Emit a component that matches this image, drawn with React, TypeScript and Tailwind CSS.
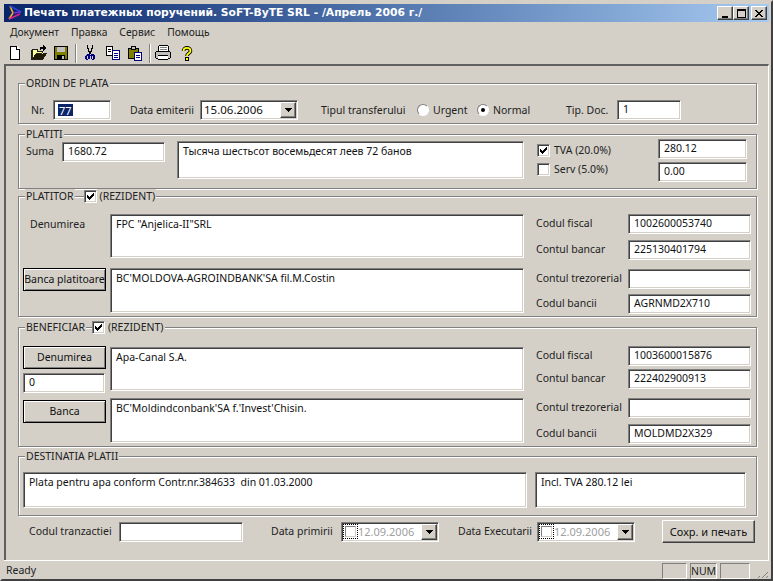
import type { ReactNode } from 'react'

const sunken =
  'border border-t-[#808080] border-l-[#808080] border-r-white border-b-white bg-white shadow-[inset_1px_1px_0_#404040,inset_-1px_-1px_0_#d4d0c8]'
const raised =
  'border border-t-white border-l-white border-r-[#404040] border-b-[#404040] bg-[#d4d0c8] shadow-[inset_-1px_-1px_0_#808080]'
const panel = 'h-[16px] border border-t-[#808080] border-l-[#808080] border-r-white border-b-white'

function Field({ value, className = '' }: { value?: string; className?: string }) {
  return (
    <div className={`${sunken} flex shrink-0 items-center overflow-hidden whitespace-nowrap pb-[1px] pl-[5px] text-[#111] ${className}`}>
      {value}
    </div>
  )
}

function Memo({ value, className = '' }: { value: string; className?: string }) {
  return <div className={`${sunken} shrink-0 overflow-hidden whitespace-pre pl-[5px] pt-[4px] text-[#111] ${className}`}>{value}</div>
}

function Arrow() {
  return (
    <div className={`${raised} flex h-[16px] w-[16px] items-center justify-center`}>
      <svg width="7" height="4" viewBox="0 0 7 4" shapeRendering="crispEdges">
        <path d="M0 0h7v1H0zM1 1h5v1H1zM2 2h3v1H2zM3 3h1v1H3z" fill="#000" />
      </svg>
    </div>
  )
}

function DateCombo({ value, disabled, className = '' }: { value: string; disabled?: boolean; className?: string }) {
  return (
    <div className={`${sunken} flex h-[20px] w-[98px] shrink-0 items-center justify-between pr-[1px] ${className}`}>
      {disabled ? (
        <div className="flex items-center text-[#a0a0a0]">
          <div className="ml-[1px] flex h-[15px] w-[15px] items-center justify-center border border-dotted border-black">
            <div className="h-[11px] w-[11px] border border-t-[#808080] border-l-[#808080] border-r-[#d4d0c8] border-b-[#d4d0c8] bg-white" />
          </div>
          <span className="text-[11px]">{value}</span>
        </div>
      ) : (
        <span className="pl-[3px] text-[11.5px] text-[#111]">{value}</span>
      )}
      <Arrow />
    </div>
  )
}

function Group({ title, className = '', children }: { title: ReactNode; className?: string; children: ReactNode }) {
  return (
    <div className={`relative w-[739px] shrink-0 border border-[#808080] shadow-[inset_1px_1px_0_#fff,1px_1px_0_#fff] ${className}`}>
      <div className="absolute left-[6px] top-[-8px] flex h-[14px] items-center text-[#222]">{title}</div>
      {children}
    </div>
  )
}

function Legend({ children, className = '' }: { children: ReactNode; className?: string }) {
  return <span className={`flex h-[14px] items-center bg-[#d4d0c8] px-[1px] ${className}`}>{children}</span>
}

function Check({ checked }: { checked?: boolean }) {
  return (
    <div className={`${sunken} flex h-[13px] w-[13px] shrink-0 items-center justify-center`}>
      {checked && (
        <svg width="7" height="7" viewBox="0 0 7 7" shapeRendering="crispEdges">
          <path d="M6 0h1v3H6zM5 1h1v3H5zM4 2h1v3H4zM3 3h1v3H3zM2 4h1v3H2zM1 3h1v3H1zM0 2h1v3H0z" fill="#000" />
        </svg>
      )}
    </div>
  )
}

function Radio({ checked, label, className = '' }: { checked?: boolean; label: string; className?: string }) {
  return (
    <div className={`flex items-center gap-[4px] ${className}`}>
      <div className="flex h-[12px] w-[12px] items-center justify-center rounded-full border border-t-[#808080] border-l-[#808080] border-r-white border-b-white bg-white">
        {checked && <div className="h-[4px] w-[4px] rounded-full bg-black" />}
      </div>
      <span className="text-[#222]">{label}</span>
    </div>
  )
}

function Btn({ label, className = '' }: { label: string; className?: string }) {
  return (
    <div className={`flex h-[23px] w-[83px] shrink-0 items-center justify-center whitespace-nowrap border border-black bg-[#d4d0c8] text-[#111] shadow-[inset_1px_1px_0_#fff,inset_-1px_-1px_0_#808080] ${className}`}>
      {label}
    </div>
  )
}

function SideRow({ label, value }: { label: string; value: string }) {
  return (
    <div className="flex items-center">
      <span className="-mt-[2px] w-[92px] text-[#222]">{label}</span>
      <Field value={value} className="h-[20px] w-[123px]" />
    </div>
  )
}

function Tool({ children, className = '' }: { children: ReactNode; className?: string }) {
  return <div className={`flex h-[16px] w-[16px] items-center justify-center ${className}`}>{children}</div>
}

function Sep({ className = '' }: { className?: string }) {
  return <div className={`h-[19px] w-[2px] border-l border-l-[#808080] border-r border-r-white ${className}`} />
}

function Toolbar() {
  return (
    <div className="flex h-[22px] shrink-0 items-center pl-[3px]">
      <Tool>
        <svg width="16" height="16" viewBox="0 0 16 16" shapeRendering="crispEdges">
          <path d="M3 1h7l3 3v10H3z" fill="#fff" />
          <path d="M3 1h7v1H4v12h8V5H9V2h1v2h3v11H3z" fill="#000" />
        </svg>
      </Tool>
      <Tool className="ml-[8px]">
        <svg width="16" height="16" viewBox="0 0 16 16" shapeRendering="crispEdges">
          <path d="M1 5h6v2h6v2H5l-3 5H1z" fill="#ffff99" />
          <path d="M2 14l3-5h10l-3 5z" fill="#c8a800" />
          <path d="M1 4h5l1 1v1h5v3h-1V7H6V5H2v8l3-5h11l-4 7H0V5z" fill="#000" fillRule="evenodd" opacity="0.85" />
          <path d="M9 2h3V0l3 3-3 3V4h-2v1H9z" fill="#000" />
        </svg>
      </Tool>
      <Tool className="ml-[6px]">
        <svg width="16" height="16" viewBox="0 0 16 16" shapeRendering="crispEdges">
          <path d="M1 1h14v14H1z" fill="#000" />
          <path d="M2 2h12v12H2z" fill="#808000" />
          <path d="M4 2h8v5H4z" fill="#c0c0c0" />
          <path d="M4 10h8v4H4z" fill="#000" />
          <path d="M9 11h2v3H9z" fill="#c0c0c0" />
        </svg>
      </Tool>
      <Sep className="ml-[6px] mr-[5px]" />
      <Tool>
        <svg width="12" height="16" viewBox="0 0 12 16" shapeRendering="crispEdges">
          <path d="M3 0h1v3h1v3h2V3h1V0h1v4H8v3H7v2H5V7H4V4H3z" fill="#000" />
          <path d="M3 9h3v1h1V9h3v1h1v4h-1v1H8v-1H7v-3H6v3H4v1H2v-1H1v-3h1v-1h1zM3 11v3h1v-3zM8 11v3h1v-3z" fill="#000080" fillRule="evenodd" />
        </svg>
      </Tool>
      <Tool className="ml-[7px]">
        <svg width="16" height="16" viewBox="0 0 16 16" shapeRendering="crispEdges">
          <path d="M1 1h7v10H1z" fill="#000" />
          <path d="M2 2h5v8H2z" fill="#fff" />
          <path d="M3 4h3v1H3zM3 6h3v1H3z" fill="#000" />
          <path d="M7 5h8v10H7z" fill="#000080" />
          <path d="M8 6h6v8H8z" fill="#fff" />
          <path d="M9 8h4v1H9zM9 10h4v1H9zM9 12h4v1H9z" fill="#000080" />
        </svg>
      </Tool>
      <Tool className="ml-[6px]">
        <svg width="16" height="16" viewBox="0 0 16 16" shapeRendering="crispEdges">
          <path d="M1 3h11v11H1z" fill="#000" />
          <path d="M2 4h9v9H2z" fill="#808000" />
          <path d="M4 1h5v4H4z" fill="#000" />
          <path d="M5 2h3v2H5z" fill="#c0c0c0" />
          <path d="M7 7h8v9H7z" fill="#000080" />
          <path d="M8 8h6v7H8z" fill="#fff" />
          <path d="M9 10h4v1H9zM9 12h4v1H9z" fill="#000080" />
        </svg>
      </Tool>
      <Sep className="ml-[6px] mr-[4px]" />
      <Tool>
        <svg width="16" height="16" viewBox="0 0 16 16" shapeRendering="crispEdges">
          <path d="M4 1h9v5H4z" fill="#fff" />
          <path d="M3 1h1v5H3zM4 0h9v1H4zM13 1h1v5h-1z" fill="#000" />
          <path d="M5 2h7v1H5zM5 4h7v1H5z" fill="#808080" />
          <path d="M1 6h14v7H1z" fill="#c0c0c0" />
          <path d="M0 7h1v6H0zM15 7h1v6h-1zM1 6h14v1H1zM1 13h14v1H1zM3 10h10v1H3z" fill="#000" />
          <path d="M3 11h10v3H3z" fill="#fff" />
          <path d="M3 14h10v1H3z" fill="#000" />
        </svg>
      </Tool>
      <Tool className="ml-[8px]">
        <svg width="12" height="15" viewBox="0 0 12 15" fill="none">
          <path d="M2.5 5C2.5 .8 9.5 .8 9.5 5C9.5 7.5 6 7 6 10" stroke="#000" strokeWidth="3.6" />
          <path d="M2.5 5C2.5 .8 9.5 .8 9.5 5C9.5 7.5 6 7 6 10" stroke="#ffff00" strokeWidth="1.8" />
          <path d="M4 11h4v4H4z" fill="#000" />
          <path d="M5 12h2v2H5z" fill="#ffff00" />
        </svg>
      </Tool>
    </div>
  )
}

export default function App() {
  return (
    <div
      className="flex h-[581px] w-[773px] flex-col overflow-hidden border-2 border-t-[#d4d0c8] border-l-[#d4d0c8] border-r-[#404040] border-b-[#404040] bg-[#d4d0c8] pl-[2px] pr-[2px] pt-[2px] text-[10.5px] leading-none"
      style={{ fontFamily: '"Noto Sans", "DejaVu Sans", sans-serif' }}
    >
      {/* Title bar */}
      <div className="flex h-[18px] shrink-0 items-center justify-between bg-gradient-to-r from-[#0a246a] to-[#a6caf0] pl-[3px] pr-[2px]">
        <div className="flex items-center gap-[1px]">
          <svg width="16" height="16" viewBox="0 0 16 16" fill="none" strokeWidth="1.6">
            <path d="M3 1l3 7-4 6" stroke="#f0b020" />
            <path d="M3 1l11 6" stroke="#3040e0" />
            <path d="M14 7L6 8" stroke="#8030d0" />
            <path d="M2 14l11-5" stroke="#e02090" />
          </svg>
          <span className="whitespace-nowrap text-[10.75px] font-bold text-white" style={{ fontFamily: '"DejaVu Sans", sans-serif' }}>
            Печать платежных поручений. SoFT-ByTE SRL - /Апрель 2006 г./
          </span>
        </div>
        <div className="flex items-center">
          {['min', 'max'].map(k => (
            <div key={k} className={`${raised} flex h-[14px] w-[16px] items-center justify-center`}>
              {k === 'min' ? (
                <div className="mt-[7px] h-[2px] w-[6px] bg-black" />
              ) : (
                <div className="h-[9px] w-[9px] border border-t-2 border-black" />
              )}
            </div>
          ))}
          <div className={`${raised} ml-[2px] flex h-[14px] w-[16px] items-center justify-center`}>
            <svg width="8" height="7" viewBox="0 0 8 7" shapeRendering="crispEdges">
              <path d="M0 0h2v1h1v1h2V1h1V0h2v1H7v1H6v1H5v1h1v1h1v1h1v1H6V6H5V5H3v1H2v1H0V6h1V5h1V4h1V3H2V2H1V1H0z" fill="#000" />
            </svg>
          </div>
        </div>
      </div>

      {/* Menu */}
      <div className="flex h-[20px] shrink-0 items-center gap-[12px] pl-[6px] text-[10.3px] text-[#222]">
        <span>Документ</span>
        <span>Правка</span>
        <span>Сервис</span>
        <span>Помощь</span>
      </div>

      <Toolbar />

      {/* Client area */}
      <div className="flex min-h-0 flex-1 flex-col border-t-2 border-l-2 border-r border-t-[#606060] border-l-[#606060] border-r-white pl-[12px] pt-[17px]">
        <Group title={<Legend>ORDIN DE PLATA</Legend>} className="h-[41px]">
          <div className="flex items-center pl-[12px] pt-[16px] text-[#222]">
            <span className="w-[22px]">Nr.</span>
            <div className={`${sunken} flex h-[20px] w-[58px] shrink-0 items-center pl-[4px]`}>
              <span className="flex h-[12px] items-center bg-[#0a246a] px-[1px] text-[11px] text-white">77</span>
            </div>
            <span className="ml-[19px] w-[70px]">Data emiterii</span>
            <DateCombo value="15.06.2006" />
            <span className="ml-[23px] w-[96px]">Tipul transferului</span>
            <Radio label="Urgent" className="w-[60px]" />
            <Radio checked label="Normal" className="w-[89px]" />
            <span className="w-[51px]">Tip. Doc.</span>
            <Field value="1" className="h-[20px] w-[64px]" />
          </div>
        </Group>

        <Group title={<Legend>PLATITI</Legend>} className="mt-[10px] h-[55px]">
          <div className="flex items-start pl-[7px] text-[#222]">
            <span className="mt-[11px] w-[36px]">Suma</span>
            <Field value="1680.72" className="mt-[7px] h-[20px] w-[103px]" />
            <Memo value="Тысяча шестьсот восемьдесят леев 72 банов" className="ml-[12px] mt-[6px] h-[38px] w-[347px]" />
            <div className="ml-[13px] mt-[4px] flex w-[210px] flex-col gap-[3px]">
              <div className="flex items-start">
                <div className="mt-[5px] flex w-[121px] items-center gap-[4px]">
                  <Check checked />
                  <span>TVA (20.0%)</span>
                </div>
                <Field value="280.12" className="h-[20px] w-[89px]" />
              </div>
              <div className="flex items-start">
                <div className="mt-[1px] flex w-[121px] items-center gap-[4px]">
                  <Check />
                  <span>Serv (5.0%)</span>
                </div>
                <Field value="0.00" className="h-[20px] w-[89px]" />
              </div>
            </div>
          </div>
        </Group>

        <Group
          className="mt-[7px] h-[121px]"
          title={
            <span className="flex items-center">
              <Legend className="mr-[9px]">PLATITOR</Legend>
              <Check checked />
              <Legend className="pl-[3px]">(REZIDENT)</Legend>
            </span>
          }
        >
          <div className="flex flex-col pl-[4px] pt-[17px]">
            <div className="flex items-start">
              <div className="w-[87px] pl-[7px] pt-[5px] text-[#222]">Denumirea</div>
              <Memo value={'FPC "Anjelica-II"SRL'} className="h-[44px] w-[414px]" />
              <div className="ml-[12px] flex flex-col gap-[6px]">
                <SideRow label="Codul fiscal" value="1002600053740" />
                <SideRow label="Contul bancar" value="225130401794" />
              </div>
            </div>
            <div className="mt-[8px] flex items-start">
              <Btn label="Banca platitoare" />
              <Memo value="BC'MOLDOVA-AGROINDBANK'SA fil.M.Costin" className="ml-[4px] h-[45px] w-[414px]" />
              <div className="ml-[12px] mt-[1px] flex flex-col gap-[5px]">
                <SideRow label="Contul trezorerial" value="" />
                <SideRow label="Codul bancii" value="AGRNMD2X710" />
              </div>
            </div>
          </div>
        </Group>

        <Group
          className="mt-[10px] h-[120px]"
          title={
            <span className="flex items-center">
              <Legend className="mr-[6px]">BENEFICIAR</Legend>
              <Check checked />
              <Legend className="pl-[3px]">(REZIDENT)</Legend>
            </span>
          }
        >
          <div className="flex flex-col pl-[4px] pt-[18px]">
            <div className="flex items-start">
              <div className="flex w-[83px] flex-col gap-[4px]">
                <Btn label="Denumirea" />
                <Field value="0" className="h-[20px] w-[82px]" />
              </div>
              <Memo value="Apa-Canal S.A." className="ml-[4px] mt-[1px] h-[44px] w-[414px]" />
              <div className="ml-[12px] flex flex-col gap-[3px]">
                <SideRow label="Codul fiscal" value="1003600015876" />
                <SideRow label="Contul bancar" value="222402900913" />
              </div>
            </div>
            <div className="mt-[5px] flex items-start">
              <Btn label="Banca" className="mt-[2px]" />
              <Memo value="BC'Moldindconbank'SA f.'Invest'Chisin." className="ml-[4px] h-[45px] w-[414px]" />
              <div className="ml-[12px] flex flex-col gap-[6px]">
                <SideRow label="Contul trezorerial" value="" />
                <SideRow label="Codul bancii" value="MOLDMD2X329" />
              </div>
            </div>
          </div>
        </Group>

        <Group title={<Legend>DESTINATIA PLATII</Legend>} className="mt-[9px] h-[60px]">
          <div className="flex items-start pl-[4px] pt-[15px]">
            <Memo value="Plata pentru apa conform Contr.nr.384633  din 01.03.2000" className="h-[36px] w-[504px]" />
            <Memo value="Incl. TVA 280.12 lei" className="ml-[8px] h-[36px] w-[211px]" />
          </div>
        </Group>

        <div className="mt-[4px] flex items-center pl-[11px] text-[#222]">
          <span className="w-[90px]">Codul tranzactiei</span>
          <Field className="h-[20px] w-[124px]" />
          <span className="ml-[28px] w-[70px]">Data primirii</span>
          <DateCombo value="12.09.2006" disabled />
          <span className="ml-[19px] w-[79px]">Data Executarii</span>
          <DateCombo value="12.09.2006" disabled />
          <div className={`${raised} ml-[27px] flex h-[23px] w-[93px] items-center justify-center text-[11px] text-[#111]`}>Сохр. и печать</div>
        </div>
      </div>

      {/* Status bar */}
      <div className="flex h-[19px] shrink-0 items-end justify-between border-t border-t-white text-[#222]">
        <span className="self-center pl-[2px]">Ready</span>
        <div className="flex items-end">
          <div className={`${panel} w-[25px]`} />
          <div className={`${panel} ml-[3px] flex w-[27px] items-center justify-center`}>NUM</div>
          <div className={`${panel} ml-[3px] w-[30px]`} />
          <svg width="12" height="12" viewBox="0 0 12 12" className="ml-[7px]" shapeRendering="crispEdges">
            <path d="M11 1v1h-1v1H9v1H8v1H7v1H6v1H5v1H4v1H3v1H2v1H1v-1h1v-1h1V9h1V8h1V7h1V6h1V5h1V4h1V3h1V2h1V1z" fill="#808080" />
            <path d="M11 5v1h-1v1H9v1H8v1H7v1H6v1H5v-1h1V9h1V8h1V7h1V6h1V5zM11 9v1h-1v1H9v-1h1V9z" fill="#808080" />
          </svg>
        </div>
      </div>
    </div>
  )
}
